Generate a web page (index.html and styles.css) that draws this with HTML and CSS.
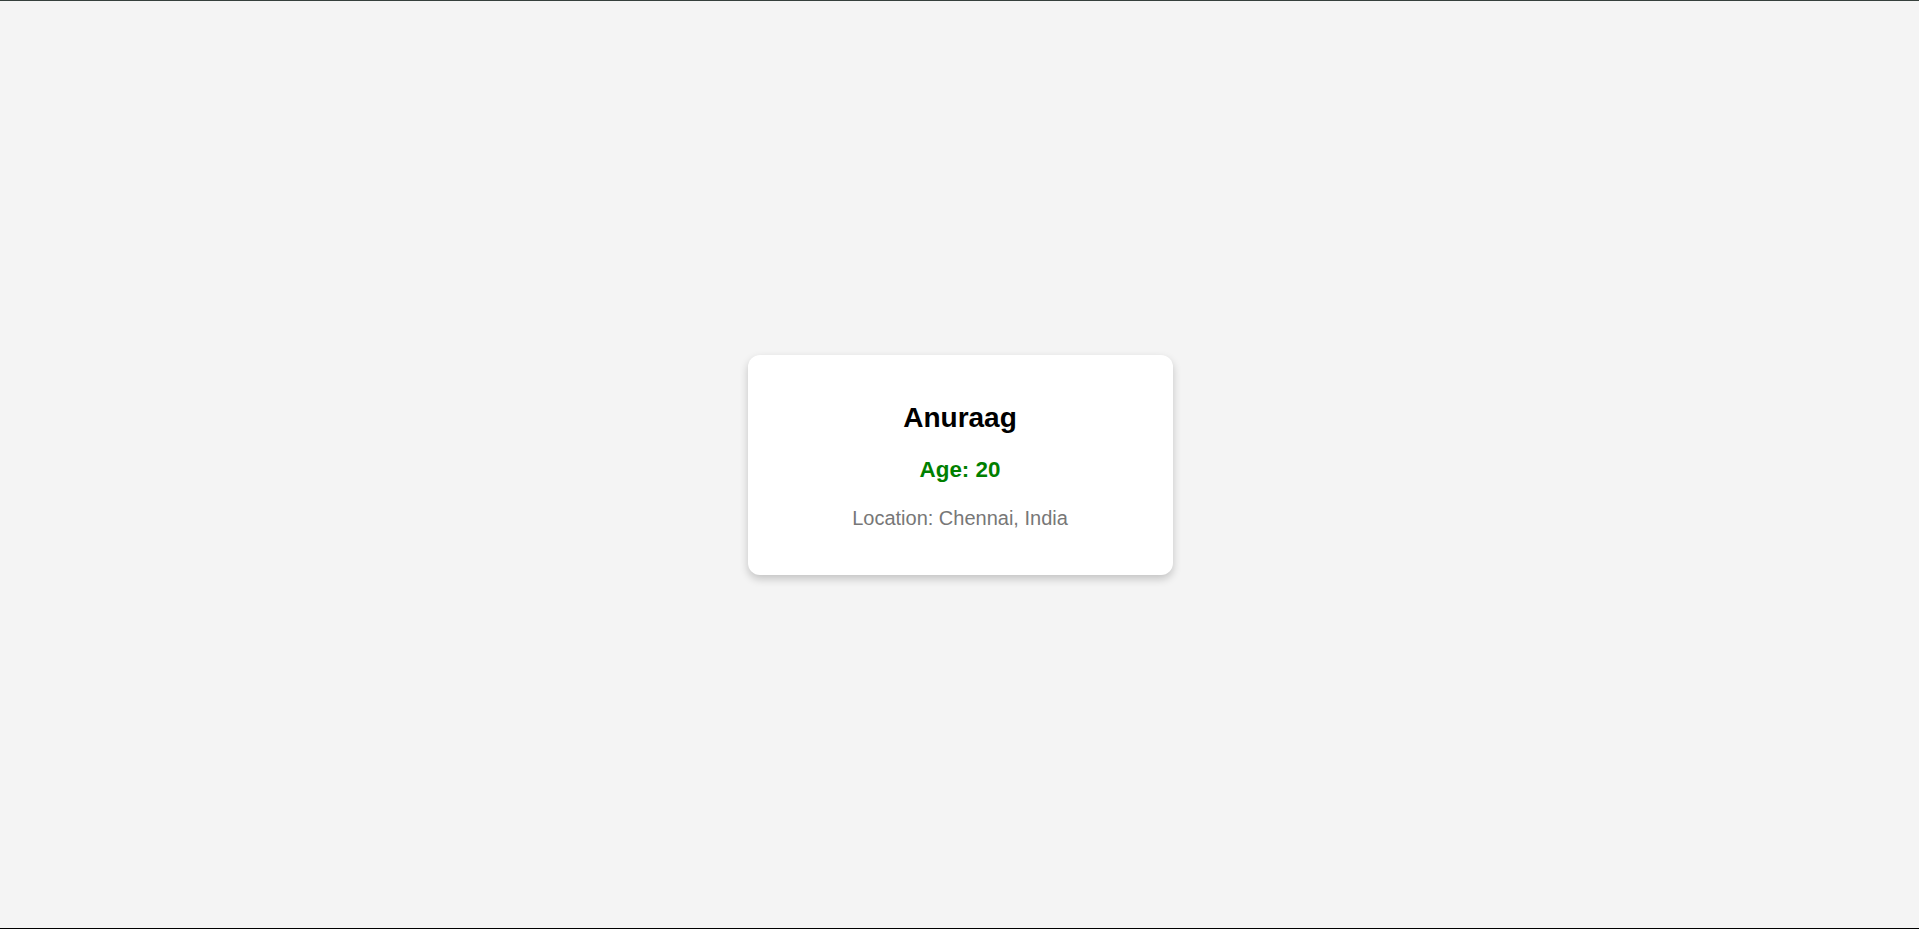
FILE: index.html
```html
<!DOCTYPE html>
<html lang="en">
<head>
<meta charset="utf-8">
<title>Profile</title>
<link rel="stylesheet" href="styles.css">
</head>
<body>
  <main class="page">
    <div class="card">
      <h2 class="name">Anuraag</h2>
      <p class="age">Age: 20</p>
      <p class="location">Location: Chennai, India</p>
    </div>
  </main>
</body>
</html>
```
FILE: styles.css
```css
html, body {
  margin: 0;
  padding: 0;
}
body {
  background: #f4f4f4;
  font-family: "Liberation Sans", Arial, sans-serif;
  height: 929px;
  box-sizing: border-box;
  border-top: 1px solid #36403c;
  border-bottom: 1px solid #000;
  overflow: hidden;
}
.page {
  height: 100%;
  display: flex;
  align-items: center;
  justify-content: center;
  padding-left: 1px;
}
.card {
  width: 425px;
  box-sizing: border-box;
  background: #fff;
  border-radius: 12px;
  box-shadow: 0 4px 8px rgba(0, 0, 0, 0.2);
  padding: 47px 20px 45px;
  text-align: center;
  display: flex;
  flex-direction: column;
}
.name {
  margin: 0;
  font-size: 28px;
  line-height: 32px;
  font-weight: bold;
  color: #000;
}
.age {
  margin: 23px 0 0;
  font-size: 22.4px;
  line-height: 26px;
  font-weight: bold;
  color: #008000;
}
.location {
  margin: 24px 0 0;
  font-size: 20px;
  line-height: 23px;
  color: #777;
}
```
